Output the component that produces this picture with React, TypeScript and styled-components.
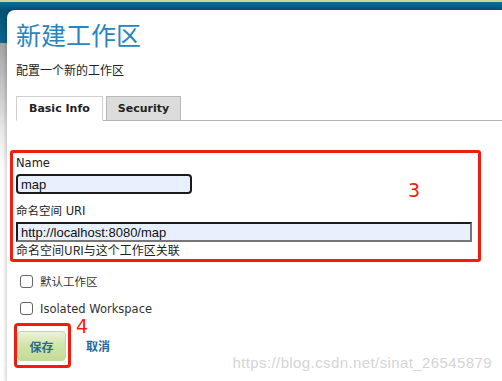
import { FC } from 'react';
import styled, { createGlobalStyle } from 'styled-components';

const CJK = '"Noto Sans CJK SC", "Liberation Sans", sans-serif';
const UI = '"DejaVu Sans", "Noto Sans CJK SC", sans-serif';
const MARK = '#f21c10';

const GlobalStyle = createGlobalStyle`
  html, body {
    margin: 0;
    padding: 0;
    background: #fff;
  }
  * {
    box-sizing: border-box;
  }
`;

const App: FC = () => (
  <Page>
    <GlobalStyle />
    <Panel>
      <Title>新建工作区</Title>
      <Subtitle>配置一个新的工作区</Subtitle>

      <TabBar>
        <Tab $active>Basic Info</Tab>
        <Tab>Security</Tab>
      </TabBar>

      <Highlight>
        <Label>Name</Label>
        <TextInput $width={176} $rounded defaultValue="map" />
        <Label $gap>命名空间 URI</Label>
        <TextInput $width={456} defaultValue="http://localhost:8080/map" />
        <Help>命名空间URI与这个工作区关联</Help>
        <StepMark $top={30} $left={395}>3</StepMark>
      </Highlight>

      <CheckRow>
        <Box />
        <CheckText>默认工作区</CheckText>
      </CheckRow>
      <CheckRow>
        <Box />
        <CheckText>Isolated Workspace</CheckText>
      </CheckRow>

      <Actions>
        <ButtonMark>
          <SaveButton>保存</SaveButton>
          <StepMark $top={-7} $left={59}>4</StepMark>
        </ButtonMark>
        <CancelLink>取消</CancelLink>
      </Actions>
    </Panel>
    <Watermark>https://blog.csdn.net/sinat_26545879</Watermark>
  </Page>
);

const Page = styled.div`
  position: relative;
  width: 502px;
  height: 381px;
  overflow: hidden;
  padding: 10px 0 0 7px;
  background: linear-gradient(
    to bottom,
    #cad79c 0,
    #cad79c 2px,
    #0c6f9c 2px,
    #055172 10px,
    #0a6791 43px,
    #a3a3a3 43px,
    #e8e8e8 130px,
    #fff 170px
  );
`;

const Panel = styled.div`
  height: 100%;
  background: #fff;
  border-top-left-radius: 8px;
  padding: 8px 0 0 9px;
  box-shadow: -2px 0 3px rgba(0, 0, 0, 0.15);
`;

const Title = styled.h1`
  margin: 0;
  font-family: ${CJK};
  font-weight: 400;
  font-size: 25px;
  line-height: 32px;
  color: #2686c2;
`;

const Subtitle = styled.p`
  margin: 12px 0 0;
  font-family: ${CJK};
  font-size: 12px;
  line-height: 16px;
  color: #222;
`;

const TabBar = styled.div`
  display: flex;
  gap: 3px;
  margin-top: 18px;
  border-bottom: 1px solid #b4b4b4;
`;

const Tab = styled.div<{ $active?: boolean }>`
  height: 25px;
  margin-bottom: -1px;
  padding: 0 ${({ $active }) => ($active ? '12px' : '11px')};
  display: flex;
  align-items: center;
  font-family: ${UI};
  font-size: 11px;
  font-weight: 700;
  color: #222;
  border: 1px solid ${({ $active }) => ($active ? '#cfcfcf' : '#b8b8b8')};
  border-bottom-color: ${({ $active }) => ($active ? '#fff' : '#b4b4b4')};
  background: ${({ $active }) => ($active ? '#fff' : '#dcdcdc')};
`;

const Highlight = styled.div`
  position: relative;
  width: 471px;
  margin: 29px 0 0 -6px;
  padding: 3px 0 1px 3px;
  border: 3px solid ${MARK};
  border-radius: 3px;
`;

const Label = styled.div<{ $gap?: boolean }>`
  margin-top: ${({ $gap }) => ($gap ? '10px' : '0')};
  font-family: ${UI};
  font-size: 11.5px;
  line-height: 15px;
  color: #222;
`;

const TextInput = styled.input<{ $width: number; $rounded?: boolean }>`
  display: block;
  width: ${({ $width }) => $width}px;
  height: 20px;
  margin-top: 3px;
  padding: 0 3px;
  font-family: 'Liberation Sans', sans-serif;
  font-size: 13px;
  color: #111;
  background: #e8f0fe;
  outline: none;
  border: 2px solid #1b1b1b;
  border-radius: ${({ $rounded }) => ($rounded ? '4px' : '0')};
  ${({ $rounded }) =>
    !$rounded &&
    `
    border-right-color: #767676;
    border-bottom-color: #767676;
  `}
`;

const Help = styled.div`
  font-family: ${CJK};
  font-size: 12px;
  line-height: 16px;
  color: #222;
`;

const StepMark = styled.span<{ $top: number; $left: number }>`
  position: absolute;
  top: ${({ $top }) => $top}px;
  left: ${({ $left }) => $left}px;
  font-family: 'DejaVu Sans', sans-serif;
  font-size: 19px;
  line-height: 15px;
  color: ${MARK};
`;

const CheckRow = styled.label`
  display: flex;
  align-items: center;
  gap: 7px;
  height: 27px;
  padding-left: 4px;
  &:first-of-type {
    margin-top: 6px;
  }
`;

const Box = styled.span`
  width: 13px;
  height: 13px;
  border: 1px solid #666;
  border-radius: 3px;
  background: #fff;
`;

const CheckText = styled.span`
  font-family: ${UI};
  font-size: 11.5px;
  line-height: 14px;
  color: #333;
`;

const Actions = styled.div`
  display: flex;
  align-items: center;
  gap: 15px;
  margin: 1px 0 0 -2px;
`;

const ButtonMark = styled.div`
  position: relative;
  padding: 5px 2px 4px 0;
  border: 3px solid ${MARK};
  border-radius: 4px;
`;

const SaveButton = styled.button`
  display: block;
  width: 49px;
  height: 30px;
  padding: 0;
  font-family: ${CJK};
  font-size: 12px;
  font-weight: 700;
  color: #2b6c8c;
  border: 1px solid #c3d6a0;
  border-radius: 4px;
  background: linear-gradient(to bottom, #ecf4d8 0%, #d2e4ac 45%, #c4db98 100%);
`;

const CancelLink = styled.span`
  font-family: ${CJK};
  font-size: 12px;
  font-weight: 700;
  color: #1f6a9a;
`;

const Watermark = styled.div`
  position: absolute;
  right: 10px;
  bottom: 10px;
  font-family: 'Liberation Sans', sans-serif;
  font-size: 15px;
  letter-spacing: 0.4px;
  color: #d4d4d4;
`;

export default App;
